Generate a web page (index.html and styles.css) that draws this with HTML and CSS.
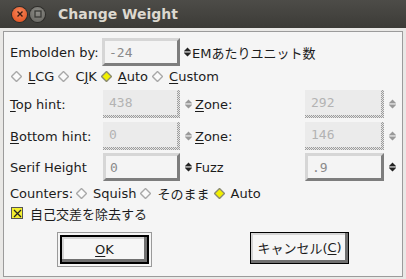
FILE: index.html
```html
<!DOCTYPE html>
<html lang="ja">
<head>
   <meta charset="UTF-8">
   <title>Change Weight</title>
   <link rel="stylesheet" href="styles.css">
</head>
<body>
<div class="window">
   <div class="titlebar">
      <span class="wbtn close"><svg width="8" height="8" viewBox="0 0 8 8"><path d="M1.5 1.5L6.5 6.5M6.5 1.5L1.5 6.5" stroke="#3a1a10" stroke-width="1.4"/></svg></span>
      <span class="wbtn min"><svg width="8" height="8" viewBox="0 0 8 8"><rect x="1" y="1" width="6" height="6" fill="none" stroke="#3a3a36" stroke-width="1.3"/></svg></span>
      <span class="title">Change Weight</span>
   </div>

   <div class="panel">
      <!-- Embolden -->
      <div class="row r1">
         <span class="lbl">Embolden by:</span>
         <span class="field raised w78">-24</span>
         <span class="spin s1"><svg width="7" height="10" viewBox="0 0 7 10"><path d="M0 4L3.5 0.5L7 4Z M0 6L7 6L3.5 9.5Z" fill="#222"/><rect x="0" y="4.6" width="7" height="0.9" fill="#222"/></svg></span>
         <span class="txt">EMあたりユニット数</span>
      </div>

      <!-- script radios -->
      <div class="row r2">
         <span class="radio"><svg width="11" height="11" viewBox="0 0 11 11"><path d="M5.5 0.5L10.5 5.5L5.5 10.5L0.5 5.5Z" fill="#fafafa" stroke="#a8a8a8" stroke-width="1.4"/></svg><u>L</u>CG</span>
         <span class="radio"><svg width="11" height="11" viewBox="0 0 11 11"><path d="M5.5 0.5L10.5 5.5L5.5 10.5L0.5 5.5Z" fill="#fafafa" stroke="#a8a8a8" stroke-width="1.4"/></svg>C<u>J</u>K</span>
         <span class="radio"><svg width="11" height="11" viewBox="0 0 11 11"><path d="M5.5 0.5L10.5 5.5L5.5 10.5L0.5 5.5Z" fill="#f2f000" stroke="#8a8a70" stroke-width="1.4"/></svg><u>A</u>uto</span>
         <span class="radio"><svg width="11" height="11" viewBox="0 0 11 11"><path d="M5.5 0.5L10.5 5.5L5.5 10.5L0.5 5.5Z" fill="#fafafa" stroke="#a8a8a8" stroke-width="1.4"/></svg><u>C</u>ustom</span>
      </div>

      <!-- Top hint -->
      <div class="row r3">
         <span class="lbl"><u>T</u>op hint:</span>
         <span class="field disabled w77">438</span>
         <span class="spin"><svg width="7" height="10" viewBox="0 0 7 10"><path d="M0 4L3.5 0.5L7 4Z M0 6L7 6L3.5 9.5Z" fill="#999"/><rect x="0" y="4.6" width="7" height="0.9" fill="#999"/></svg></span>
         <span class="lbl2"><u>Z</u>one:</span>
         <span class="field disabled w79">292</span>
         <span class="spin"><svg width="7" height="10" viewBox="0 0 7 10"><path d="M0 4L3.5 0.5L7 4Z M0 6L7 6L3.5 9.5Z" fill="#999"/><rect x="0" y="4.6" width="7" height="0.9" fill="#999"/></svg></span>
      </div>

      <!-- Bottom hint -->
      <div class="row r4">
         <span class="lbl"><u>B</u>ottom hint:</span>
         <span class="field disabled w77">0</span>
         <span class="spin"><svg width="7" height="10" viewBox="0 0 7 10"><path d="M0 4L3.5 0.5L7 4Z M0 6L7 6L3.5 9.5Z" fill="#999"/><rect x="0" y="4.6" width="7" height="0.9" fill="#999"/></svg></span>
         <span class="lbl2"><u>Z</u>one:</span>
         <span class="field disabled w79">146</span>
         <span class="spin"><svg width="7" height="10" viewBox="0 0 7 10"><path d="M0 4L3.5 0.5L7 4Z M0 6L7 6L3.5 9.5Z" fill="#999"/><rect x="0" y="4.6" width="7" height="0.9" fill="#999"/></svg></span>
      </div>

      <!-- Serif / Fuzz -->
      <div class="row r5">
         <span class="lbl">Serif Height</span>
         <span class="field raised w77">0</span>
         <span class="spin"><svg width="7" height="10" viewBox="0 0 7 10"><path d="M0 4L3.5 0.5L7 4Z M0 6L7 6L3.5 9.5Z" fill="#222"/><rect x="0" y="4.6" width="7" height="0.9" fill="#222"/></svg></span>
         <span class="lbl2">Fuzz</span>
         <span class="field raised w79">.9</span>
         <span class="spin"><svg width="7" height="10" viewBox="0 0 7 10"><path d="M0 4L3.5 0.5L7 4Z M0 6L7 6L3.5 9.5Z" fill="#222"/><rect x="0" y="4.6" width="7" height="0.9" fill="#222"/></svg></span>
      </div>

      <!-- Counters -->
      <div class="row r6">
         <span class="txt">Counters:</span>
         <span class="radio"><svg width="11" height="11" viewBox="0 0 11 11"><path d="M5.5 0.5L10.5 5.5L5.5 10.5L0.5 5.5Z" fill="#fafafa" stroke="#a8a8a8" stroke-width="1.4"/></svg>Squish</span>
         <span class="radio"><svg width="11" height="11" viewBox="0 0 11 11"><path d="M5.5 0.5L10.5 5.5L5.5 10.5L0.5 5.5Z" fill="#fafafa" stroke="#a8a8a8" stroke-width="1.4"/></svg>そのまま</span>
         <span class="radio"><svg width="11" height="11" viewBox="0 0 11 11"><path d="M5.5 0.5L10.5 5.5L5.5 10.5L0.5 5.5Z" fill="#f2f000" stroke="#8a8a70" stroke-width="1.4"/></svg>Auto</span>
      </div>

      <!-- checkbox -->
      <div class="row r7">
         <span class="check"><svg width="9" height="9" viewBox="0 0 9 9"><path d="M1 1L8 8M8 1L1 8" stroke="#222" stroke-width="1.3"/></svg></span>
         <span class="txt">自己交差を除去する</span>
      </div>

      <div class="buttons">
         <span class="defframe"><span class="button ok"><u>O</u>K</span></span>
         <span class="button cancel">キャンセル(<u>C</u>)</span>
      </div>
   </div>
</div>
</body>
</html>
```

FILE: styles.css
```css
body {
   margin: 0;
   font-family: "DejaVu Sans", "Noto Sans CJK JP", sans-serif;
   font-size: 13px;
   color: #1c1c1c;
   background-color: #e9e8e6;
}

.window {
   width: 406px;
   height: 279px;
   overflow: hidden;
   display: flex;
   flex-direction: column;
}

.titlebar {
   height: 28px;
   flex: none;
   display: flex;
   align-items: center;
   background: linear-gradient(#4d4c48, #3c3b37);
   padding-left: 12px;
}

.wbtn {
   width: 15px;
   height: 15px;
   border-radius: 50%;
   display: flex;
   align-items: center;
   justify-content: center;
   margin-right: 3px;
}

.close {
   background: radial-gradient(circle at 50% 35%, #f7875c, #df4a17);
   box-shadow: 0 0 0 1px #2e2d2a;
}

.min {
   background: radial-gradient(circle at 50% 35%, #8e8d88, #62615c);
   box-shadow: 0 0 0 1px #2e2d2a;
}

.title {
   margin-left: 10px;
   font-weight: bold;
   font-size: 14px;
   color: #dcd8cf;
}

.panel {
   flex: 1;
   margin: 3px 3px 2px 3px;
   border: 1px solid #9b9b9b;
   background-color: #f5f5f5;
   padding: 0 0 0 6px;
   display: flex;
   flex-direction: column;
}

.row {
   display: flex;
   align-items: center;
}

.r1 { height: 28px; margin-top: 6px; }
.r2 { height: 20px; }
.r3 { height: 28px; margin-top: 4px; }
.r4 { height: 28px; margin-top: 4px; }
.r5 { height: 28px; margin-top: 3px; }
.r6 { height: 22px; margin-top: 1px; }
.r7 { height: 18px; }

.lbl {
   width: 93px;
   flex: none;
}

.r1 .lbl { width: 92px; }

.lbl2 {
   width: 110px;
   flex: none;
}

.field {
   box-sizing: border-box;
   height: 28px;
   flex: none;
   display: flex;
   align-items: center;
   padding-left: 6px;
   font-family: "DejaVu Sans Mono", monospace;
   font-size: 13px;
   color: #8a8a8a;
}

.w77 { width: 77px; }
.w78 { width: 78px; }
.w79 { width: 79px; }

.raised {
   border: 3px solid;
   border-color: #d6d6d6 #7d7d7d #7d7d7d #d6d6d6;
   background-color: #f4f4f4;
   padding-left: 4px;
}

.disabled {
   color: #b3b3b3;
   padding-bottom: 3px;
   background:
      linear-gradient(#ebebeb, #ebebeb) 0 0 / calc(100% - 3px) calc(100% - 3px) no-repeat,
      repeating-conic-gradient(#9c9c9c 0 25%, #e4e4e4 0 50%) 0 0 / 2px 2px;
}

.spin {
   width: 15px;
   flex: none;
   display: flex;
   justify-content: center;
}

.spin svg { margin-left: 2px; }

.s1 { width: 12px; }

.radio {
   display: flex;
   align-items: center;
   margin-right: 4px;
}

.radio svg {
   margin-right: 6px;
}

.r2 .radio:first-child { margin-left: 1px; }

.r6 .txt { margin-right: 3px; }

u {
   text-decoration-thickness: 1px;
   text-underline-offset: 2px;
}

.check {
   width: 10px;
   height: 10px;
   flex: none;
   border: 1px solid #555;
   background-color: #f4f030;
   display: flex;
   align-items: center;
   justify-content: center;
   margin: 0 7px 0 1px;
}

.buttons {
   display: flex;
   align-items: flex-start;
   margin-top: 10px;
}

.defframe {
   margin-left: 47px;
   border: 1px solid #9a9a9a;
   padding: 2px;
   background-color: #f5f5f5;
}

.button {
   box-sizing: border-box;
   display: flex;
   align-items: center;
   justify-content: center;
   border: 1px solid #000;
   background-color: #f6f6f6;
   box-shadow: inset -3px -3px 0 #707070, inset 2px 2px 0 #d4d4d4;
   font-family: "DejaVu Sans", "Noto Sans CJK JP", sans-serif;
}

.ok {
   width: 89px;
   height: 29px;
   border-width: 2px;
}

.cancel {
   margin-left: 98px;
   width: 99px;
   height: 32px;
   padding-bottom: 2px;
}
```
